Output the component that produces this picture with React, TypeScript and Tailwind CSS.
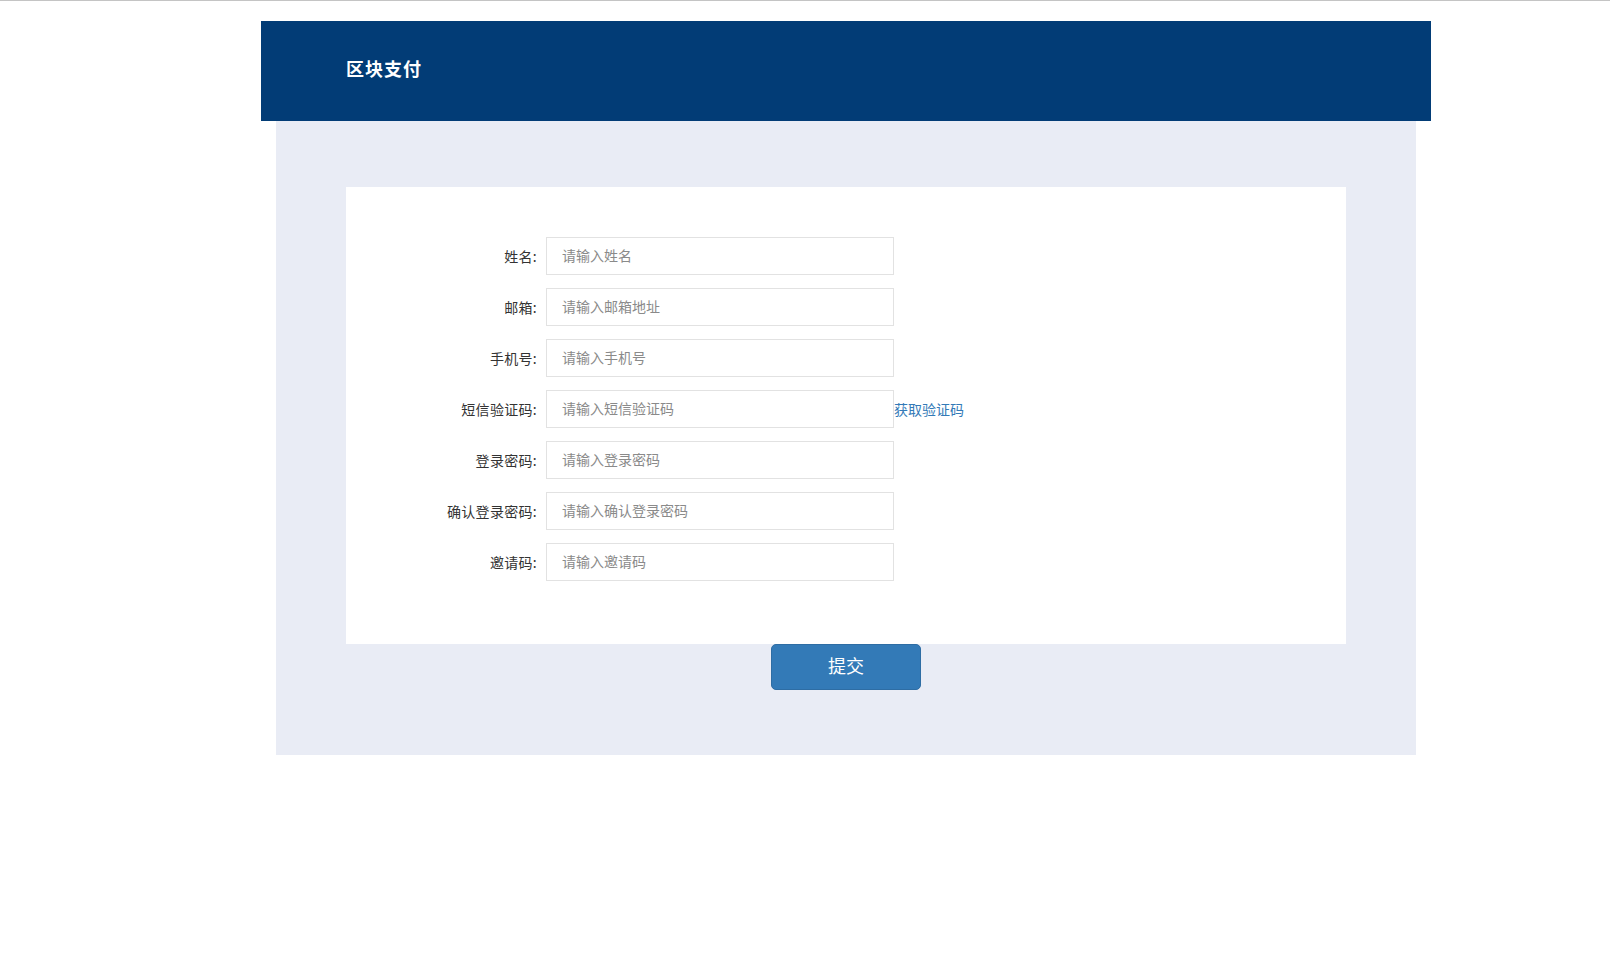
import { useState } from 'react';

const fields = [
  { key: 'name', label: '姓名:', placeholder: '请输入姓名', type: 'text' },
  { key: 'email', label: '邮箱:', placeholder: '请输入邮箱地址', type: 'text' },
  { key: 'phone', label: '手机号:', placeholder: '请输入手机号', type: 'text' },
  { key: 'code', label: '短信验证码:', placeholder: '请输入短信验证码', type: 'text', sms: true },
  { key: 'password', label: '登录密码:', placeholder: '请输入登录密码', type: 'password' },
  { key: 'confirm', label: '确认登录密码:', placeholder: '请输入确认登录密码', type: 'password' },
  { key: 'invite', label: '邀请码:', placeholder: '请输入邀请码', type: 'text' },
];

export default function App() {
  const [values, setValues] = useState<Record<string, string>>({});

  return (
    <div
      className="min-h-screen bg-white border-t border-[#c4c4c4]"
      style={{ fontFamily: '"Noto Sans CJK SC", "Noto Sans", sans-serif' }}
    >
      <div className="w-[1170px] ml-[261px] pt-5">
        <div className="h-[100px] bg-[#023c76] flex items-center pl-[85px] pb-[5px]">
          <h1 className="text-[18px] font-bold text-white tracking-[1px]">区块支付</h1>
        </div>

        <div className="mx-[15px] bg-[#e9ecf5] pt-[66px] pb-[65px] px-[70px]">
          <div className="bg-white pt-[50px] pb-[63px] flex flex-col gap-[13px]">
            {fields.map((f) => (
              <div key={f.key} className="flex items-center">
                <label className="w-[200px] pr-[9px] text-right text-[14px] text-[#333] leading-none whitespace-nowrap tracking-[0.3px]">
                  {f.label}
                </label>
                <input
                  type={f.type}
                  value={values[f.key] ?? ''}
                  onChange={(e) => setValues({ ...values, [f.key]: e.target.value })}
                  placeholder={f.placeholder}
                  className="w-[348px] h-[38px] border border-[#e2e2e2] px-[15px] pb-[2px] text-[14px] text-[#333] placeholder:text-[#8a8a8a] outline-none"
                />
                {f.sms && (
                  <a href="#" className="text-[14px] text-[#337ab7] whitespace-nowrap">
                    获取验证码
                  </a>
                )}
              </div>
            ))}
          </div>
          <div className="flex justify-center">
            <button className="w-[150px] h-[46px] rounded-[5px] bg-[#337ab7] border border-[#2e6da4] text-white text-[18px] pb-[4px]">
              提交
            </button>
          </div>
        </div>
      </div>
    </div>
  );
}
